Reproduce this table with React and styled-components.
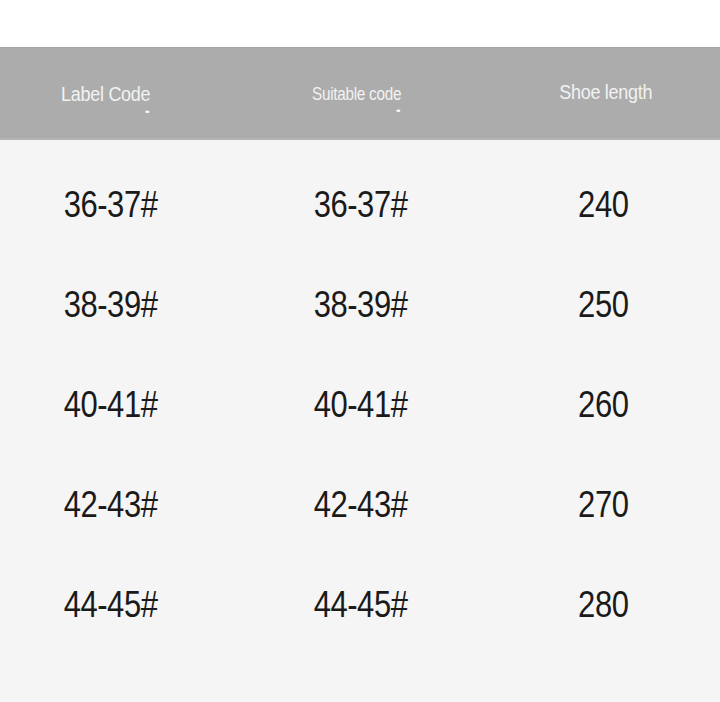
import React from "react";
import styled, { createGlobalStyle } from "styled-components";

const GlobalStyle = createGlobalStyle`
  html, body {
    margin: 0;
    padding: 0;
    background: #ffffff;
  }
  body {
    font-family: "Liberation Sans", Arial, sans-serif;
  }
`;

const Page = styled.div`
  width: 720px;
  height: 702px;
  display: flex;
  flex-direction: column;
  background: #ffffff;
  overflow: hidden;
`;

const TopGap = styled.div`
  height: 47px;
  flex: none;
`;

const Columns = styled.div`
  display: grid;
  grid-template-columns: 222px 278px 1fr;
  padding-right: 8px;
`;

const HeaderBar = styled(Columns)`
  height: 90px;
  flex: none;
  background: #acacac;
  border-top: 1px solid #a4a4a4;
  border-bottom: 2px solid #b4b4b4;
  align-items: center;
`;

const HeadCell = styled.div`
  position: relative;
  justify-self: center;
  color: #f2f2f2;
  font-size: ${p => p.size}px;
  letter-spacing: -0.3px;
  margin-top: ${p => p.lift}px;
  margin-right: ${p => p.shift}px;
  transform: scale(0.9, 1.05);
`;

const Tick = styled.span`
  position: absolute;
  right: 1px;
  bottom: -6px;
  width: 4px;
  height: 2px;
  background: #ffffff;
`;

const Body = styled.div`
  flex: 1;
  background: #f5f5f5;
  padding-top: 15px;
`;

const Row = styled(Columns)`
  height: 100px;
  align-items: center;
`;

const Cell = styled.div`
  justify-self: center;
  color: #1a1a1a;
  font-size: 36px;
  letter-spacing: -0.5px;
  line-height: 100px;
  margin-right: ${p => p.shift}px;
  transform: scaleX(0.86);
`;

const rows = [
  ["36-37#", "36-37#", "240"],
  ["38-39#", "38-39#", "250"],
  ["40-41#", "40-41#", "260"],
  ["42-43#", "42-43#", "270"],
  ["44-45#", "44-45#", "280"]
];

const App = () => (
  <Page>
    <GlobalStyle />
    <TopGap />
    <HeaderBar>
      <HeadCell size={20} lift={2} shift={10}>
        Label Code
        <Tick />
      </HeadCell>
      <HeadCell size={17} lift={4} shift={8}>
        Suitable code
        <Tick />
      </HeadCell>
      <HeadCell size={20} lift={-2} shift={0}>
        Shoe length
      </HeadCell>
    </HeaderBar>
    <Body>
      {rows.map(r => (
        <Row key={r[0]}>
          {r.map((v, i) => (
            <Cell key={i} shift={i === 2 ? 5 : 0}>
              {v}
            </Cell>
          ))}
        </Row>
      ))}
    </Body>
  </Page>
);

export default App;
